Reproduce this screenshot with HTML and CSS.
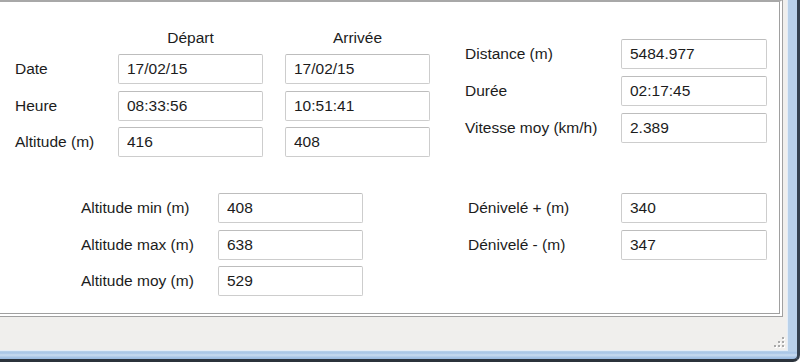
FILE: index.html
```html
<!DOCTYPE html>
<html lang="fr">
<head>
    <meta charset="UTF-8">
    <title>Statistiques du parcours</title>
    <link rel="stylesheet" href="styles.css">
</head>
<body>
    <div class="window">
        <div class="client">
            <div class="panel">
                <div class="top-row">
                    <div class="group trip-grid">
                        <div></div>
                        <div class="col-head">Départ</div>
                        <div class="col-head">Arrivée</div>

                        <label>Date</label>
                        <input class="field" type="text" value="17/02/15" readonly>
                        <input class="field" type="text" value="17/02/15" readonly>

                        <label>Heure</label>
                        <input class="field" type="text" value="08:33:56" readonly>
                        <input class="field" type="text" value="10:51:41" readonly>

                        <label>Altitude (m)</label>
                        <input class="field" type="text" value="416" readonly>
                        <input class="field" type="text" value="408" readonly>
                    </div>

                    <div class="group totals-grid">
                        <label>Distance (m)</label>
                        <input class="field" type="text" value="5484.977" readonly>
                        <label>Durée</label>
                        <input class="field" type="text" value="02:17:45" readonly>
                        <label>Vitesse moy (km/h)</label>
                        <input class="field" type="text" value="2.389" readonly>
                    </div>
                </div>

                <div class="bottom-row">
                    <div class="group alt-grid">
                        <label>Altitude min (m)</label>
                        <input class="field" type="text" value="408" readonly>
                        <label>Altitude max (m)</label>
                        <input class="field" type="text" value="638" readonly>
                        <label>Altitude moy (m)</label>
                        <input class="field" type="text" value="529" readonly>
                    </div>

                    <div class="group climb-grid">
                        <label>Dénivelé + (m)</label>
                        <input class="field" type="text" value="340" readonly>
                        <label>Dénivelé - (m)</label>
                        <input class="field" type="text" value="347" readonly>
                    </div>
                </div>
            </div>

            <div class="statusbar">
                <svg class="size-grip" width="14" height="14" viewBox="0 0 14 14">
                    <g fill="#ffffff">
                        <rect x="11" y="3" width="2" height="2"/>
                        <rect x="7" y="7" width="2" height="2"/>
                        <rect x="11" y="7" width="2" height="2"/>
                        <rect x="3" y="11" width="2" height="2"/>
                        <rect x="7" y="11" width="2" height="2"/>
                        <rect x="11" y="11" width="2" height="2"/>
                    </g>
                    <g fill="#a9a9a9">
                        <rect x="10" y="2" width="2" height="2"/>
                        <rect x="6" y="6" width="2" height="2"/>
                        <rect x="10" y="6" width="2" height="2"/>
                        <rect x="2" y="10" width="2" height="2"/>
                        <rect x="6" y="10" width="2" height="2"/>
                        <rect x="10" y="10" width="2" height="2"/>
                    </g>
                </svg>
            </div>
        </div>
    </div>
</body>
</html>
```

FILE: styles.css
```css
* {
    margin: 0;
    padding: 0;
    box-sizing: border-box;
}

body {
    font-family: 'Liberation Sans', Arial, sans-serif;
    font-size: 15.5px;
    color: #1c1c1c;
    background: #ffffff;
}

/* window frame (aero blue edge on the right and bottom) */
.window {
    width: 800px;
    height: 362px;
    display: flex;
    background: linear-gradient(to bottom, #b9d1ea 0, #b9d1ea 351px, #a6c4e6 353px, #c9dcf0 355px, #9dbde2 358px);
    border-right: 3px solid #34414f;
    border-bottom: 3px solid #2b323b;
    border-bottom-right-radius: 7px;
    padding: 0 9px 8px 0;
}

.client {
    flex: 1;
    display: flex;
    flex-direction: column;
    background: #f0efed;
    border-right: 1px solid #e4edf7;
    border-bottom: 1px solid #e4edf7;
}

.panel {
    width: 783px;
    height: 317px;
    background: #ffffff;
    border-top: 2px solid #a8a8a8;
    border-right: 4px double #a0a0a0;
    border-bottom: 4px double #a0a0a0;
}

.statusbar {
    flex: 1;
    position: relative;
}

.size-grip {
    position: absolute;
    right: 1px;
    bottom: 1px;
}

/* form groups */
.top-row,
.bottom-row {
    display: flex;
    align-items: flex-start;
}

.group {
    display: grid;
    align-items: center;
}

.group label {
    white-space: nowrap;
}

.trip-grid {
    margin: 25.5px 0 0 15px;
    grid-template-columns: 81px 145px 145px;
    grid-template-rows: 20px repeat(3, 30px);
    column-gap: 22px;
    row-gap: 6.5px;
}

.col-head {
    text-align: center;
}

.totals-grid {
    margin: 37px 0 0 35px;
    grid-template-columns: 156px 146px;
    grid-template-rows: repeat(3, 30px);
    row-gap: 7px;
}

.bottom-row {
    margin-top: 36px;
}

.alt-grid {
    margin-left: 81px;
    grid-template-columns: 137px 145px;
    grid-template-rows: repeat(3, 30px);
    row-gap: 6.5px;
}

.climb-grid {
    margin-left: 105px;
    grid-template-columns: 153px 146px;
    grid-template-rows: repeat(2, 30px);
    row-gap: 6.5px;
}

.field {
    height: 30px;
    width: 100%;
    font: inherit;
    color: #1c1c1c;
    background: #ffffff;
    border: 1px solid #cdcdcd;
    border-top-color: #bdbdbd;
    border-radius: 2px;
    padding: 0 8px;
    outline: none;
}
```
